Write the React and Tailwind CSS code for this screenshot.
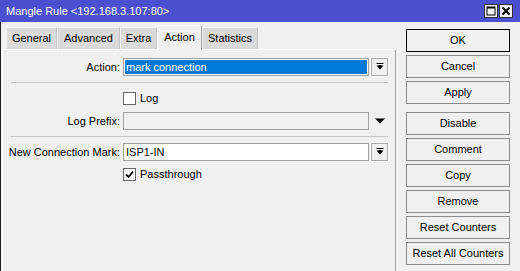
import React from "react";

function DropBtn() {
  return (
    <div className="ml-[2px] w-[17px] h-[18px] border border-[#a8a8a8] outline outline-1 outline-white bg-[#f0f0f0] flex items-center justify-center">
      <svg width="8" height="8" viewBox="0 0 8 8">
        <rect x="0.5" y="0" width="7" height="1" fill="#000" />
        <polygon points="0.5,2.5 7.5,2.5 4,6.5" fill="#000" />
        <rect x="2.5" y="2" width="3" height="2" fill="#000" />
      </svg>
    </div>
  );
}

function Checkbox({ checked }) {
  return (
    <div className="w-[13px] h-[13px] border border-[#666] bg-white flex items-center justify-center">
      {checked && (
        <svg width="9" height="9" viewBox="0 0 9 9">
          <path d="M1 4.5 L3.5 7 L8 1.5" stroke="#000" strokeWidth="1.8" fill="none" />
        </svg>
      )}
    </div>
  );
}

const tabs = [
  { name: "General", w: "w-[51px]" },
  { name: "Advanced", w: "w-[63px]" },
  { name: "Extra", w: "w-[37px]" },
  { name: "Action", w: "w-[45px]", active: true },
  { name: "Statistics", w: "w-[56px]" },
];

const buttons = [
  { label: "OK", def: true },
  { label: "Cancel" },
  { label: "Apply" },
  { label: "Disable", gap: true },
  { label: "Comment" },
  { label: "Copy" },
  { label: "Remove" },
  { label: "Reset Counters" },
  { label: "Reset All Counters" },
];

export default function App() {
  return (
    <div className="w-[520px] h-[271px] overflow-hidden bg-[#f0f0f0] text-[11px] text-black font-['Liberation_Sans',Arial,sans-serif] flex flex-col">
      {/* title bar */}
      <div className="h-[22px] bg-[#4a50d0] flex items-center justify-between pl-[6px] pr-[7px] shrink-0">
        <span className="text-white text-[11px] leading-none">Mangle Rule &lt;192.168.3.107:80&gt;</span>
        <div className="flex gap-[1px]">
          <div className="w-[14px] h-[14px] border border-[#333] bg-[#f0f0f0] flex items-center justify-center">
            <svg width="10" height="10" viewBox="0 0 10 10">
              <rect x="1" y="1" width="8" height="8" fill="none" stroke="#000" strokeWidth="1" />
              <rect x="1" y="1" width="8" height="1.5" fill="#000" />
            </svg>
          </div>
          <div className="w-[14px] h-[14px] border border-[#333] bg-[#f0f0f0] flex items-center justify-center">
            <svg width="10" height="10" viewBox="0 0 10 10">
              <path d="M1.5 1.5 L8.5 8.5 M8.5 1.5 L1.5 8.5" stroke="#000" strokeWidth="2" />
            </svg>
          </div>
        </div>
      </div>

      <div className="flex flex-1 border-l border-[#222]">
        {/* left: tabs + panel */}
        <div className="w-[395px] flex flex-col">
          <div className="h-[27px] flex items-end pl-[5px]">
            {tabs.map((t) =>
              t.active ? (
                <div
                  key={t.name}
                  className={`${t.w} h-[25px] bg-[#f0f0f0] border-t border-l border-r border-t-white border-l-white border-r-[#a0a0a0] flex items-center justify-center pb-[2px] relative top-[1px]`}
                >
                  {t.name}
                </div>
              ) : (
                <div
                  key={t.name}
                  className={`${t.w} h-[22px] bg-[#dadada] border-t border-l border-r border-[#f4f4f4] border-r-[#c4c4c4] flex items-center justify-center`}
                >
                  {t.name}
                </div>
              )
            )}
          </div>
          <div className="flex-1 ml-[1px] border-l border-t border-white border-r border-r-[#a0a0a0] pt-[8px]">
            {/* Action */}
            <div className="flex items-center h-[18px]">
              <div className="w-[117px] text-right">Action:</div>
              <div className="ml-[3px] w-[246px] h-[18px] border border-[#a0a0a0] bg-white p-[1px]">
                <div className="w-full h-full bg-[#0078d7] text-white flex items-center pl-[1px] leading-none">mark connection</div>
              </div>
              <DropBtn />
            </div>
            <div className="mt-[6px] ml-[8px] w-[377px] h-[1px] bg-[#c4c4c4]" />
            {/* Log */}
            <div className="mt-[9px] flex items-center h-[13px] pl-[120px]">
              <Checkbox />
              <span className="ml-[4px]">Log</span>
            </div>
            {/* Log Prefix */}
            <div className="mt-[7px] flex items-center h-[18px]">
              <div className="w-[117px] text-right">Log Prefix:</div>
              <div className="ml-[3px] w-[246px] h-[18px] border border-[#a0a0a0] bg-[#f0f0f0]" />
              <div className="ml-[6px] w-[10px] flex items-center justify-center">
                <svg width="10" height="6" viewBox="0 0 10 6">
                  <polygon points="0,0.5 10,0.5 5,5.5" fill="#000" />
                </svg>
              </div>
            </div>
            <div className="mt-[6px] ml-[8px] w-[377px] h-[1px] bg-[#c4c4c4]" />
            {/* New Connection Mark */}
            <div className="mt-[6px] flex items-center h-[18px]">
              <div className="w-[117px] text-right whitespace-nowrap">New Connection Mark:</div>
              <div className="ml-[3px] w-[246px] h-[18px] border border-[#a0a0a0] bg-white flex items-center pl-[2px] leading-none">ISP1-IN</div>
              <DropBtn />
            </div>
            {/* Passthrough */}
            <div className="mt-[7px] flex items-center h-[13px] pl-[120px]">
              <Checkbox checked />
              <span className="ml-[4px]">Passthrough</span>
            </div>
          </div>
        </div>

        {/* right: buttons */}
        <div className="flex-1 flex flex-col pt-[7px] pl-[10px] pr-[10px]">
          {buttons.map((b, i) => (
            <div
              key={b.label}
              className={`h-[23px] w-[104px] flex items-center justify-center bg-[#f0f0f0] border ${
                b.def ? "border-black" : "border-[#8c8c8c]"
              } ${i === 0 ? "" : b.gap ? "mt-[8px]" : "mt-[3px]"}`}
            >
              {b.label}
            </div>
          ))}
        </div>
      </div>
    </div>
  );
}
